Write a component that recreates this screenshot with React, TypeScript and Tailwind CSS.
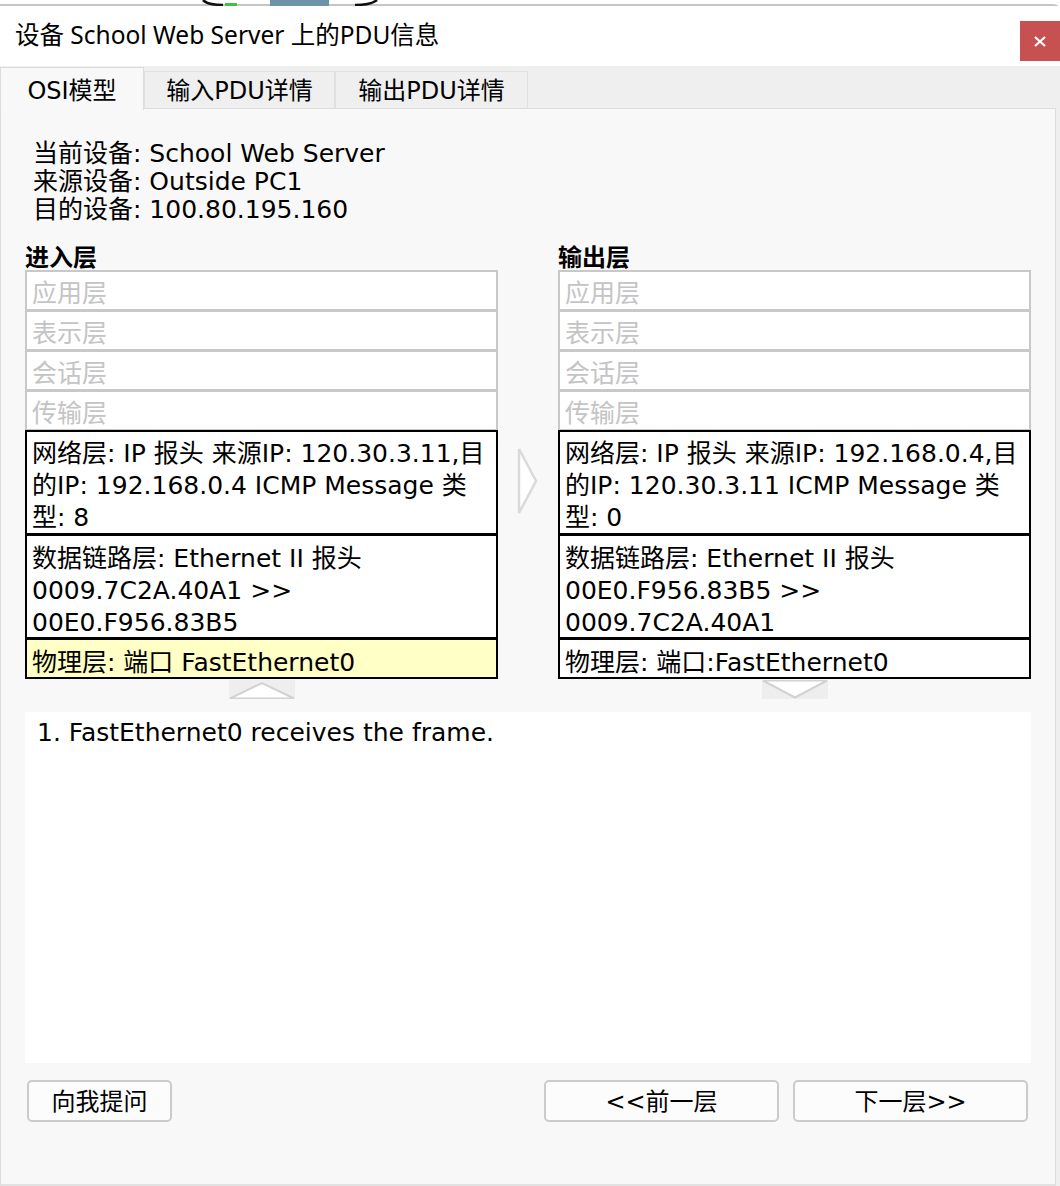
import { ReactNode } from 'react'

const body = 'font-["DejaVu_Sans","Noto_Sans_CJK_SC",sans-serif]'

type Side = {
  title: string
  network: string[]
  datalink: string[]
  physical: string
  physicalBg: string
  arrow: 'up' | 'down'
}

const greyLayers = ['应用层', '表示层', '会话层', '传输层']

const sides: Side[] = [
  {
    title: '进入层',
    network: ['网络层: IP 报头 来源IP: 120.30.3.11,目', '的IP: 192.168.0.4 ICMP Message 类', '型: 8'],
    datalink: ['数据链路层: Ethernet II 报头', '0009.7C2A.40A1 >>', '00E0.F956.83B5'],
    physical: '物理层: 端口 FastEthernet0',
    physicalBg: 'bg-[#ffffc6]',
    arrow: 'up',
  },
  {
    title: '输出层',
    network: ['网络层: IP 报头 来源IP: 192.168.0.4,目', '的IP: 120.30.3.11 ICMP Message 类', '型: 0'],
    datalink: ['数据链路层: Ethernet II 报头', '00E0.F956.83B5 >>', '0009.7C2A.40A1'],
    physical: '物理层: 端口:FastEthernet0',
    physicalBg: 'bg-white',
    arrow: 'down',
  },
]

function Lines({ lines }: { lines: string[] }) {
  return (
    <>
      {lines.map((l) => (
        <div key={l} className="whitespace-nowrap">
          {l}
        </div>
      ))}
    </>
  )
}

function Scroller({ dir }: { dir: 'up' | 'down' }) {
  return (
    <div className="mt-px flex h-[19px] w-[66px] self-center bg-[#eeeeee]">
      <svg width="66" height="19" viewBox="0 0 66 19">
        {dir === 'up' ? (
          <polygon points="1,18.5 33,3 65,18.5" fill="#ffffff" stroke="#d2d2d2" strokeWidth="2" />
        ) : (
          <polygon points="1,0.5 33,17.5 65,0.5" fill="#ffffff" stroke="#d2d2d2" strokeWidth="2" />
        )}
      </svg>
    </div>
  )
}

function Column({ side }: { side: Side }) {
  return (
    <div className="flex w-[473px] flex-col">
      <div className="h-[26px] text-[24px] leading-[28px] font-bold text-black">{side.title}</div>
      {greyLayers.map((g, i) => (
        <div
          key={g}
          className={`h-[41px] overflow-hidden border-2 border-[#c8c8c8] bg-white px-[5px] pt-[6px] leading-[32px] text-[#c4c4c4] ${i > 0 ? '-mt-px' : ''}`}
        >
          {g}
        </div>
      ))}
      <Box className="h-[105px] bg-white pt-[6px]">
        <Lines lines={side.network} />
      </Box>
      <Box className="h-[105px] bg-white pt-[7px]">
        <Lines lines={side.datalink} />
      </Box>
      <Box className={`h-[41px] pt-[7px] ${side.physicalBg}`}>
        <div className="whitespace-nowrap">{side.physical}</div>
      </Box>
      <Scroller dir={side.arrow} />
    </div>
  )
}

function Box({ className, children }: { className: string; children: ReactNode }) {
  return (
    <div
      className={`-mt-px overflow-hidden border-2 border-black px-[5px] leading-[32px] text-black ${className}`}
    >
      {children}
    </div>
  )
}

function Tab({ label, active, width }: { label: string; active?: boolean; width: string }) {
  return (
    <div
      className={
        active
          ? `relative z-10 -mb-[2px] flex h-[43px] items-center justify-center border border-b-0 border-[#dddddd] bg-[#f8f8f8] pt-[3px] ${width}`
          : `flex h-[37px] items-center justify-center border border-b-0 border-[#e0e0e0] bg-[#efefef] pt-[2px] ${width}`
      }
    >
      {label}
    </div>
  )
}

function NavButton({ children, width }: { children: ReactNode; width: string }) {
  return (
    <button
      className={`flex h-[42px] items-center justify-center rounded-[5px] border-2 border-[#cbcbcb] bg-[#fcfcfc] pt-[2px] text-[24px] leading-none text-black ${width}`}
    >
      {children}
    </button>
  )
}

export default function App() {
  return (
    <div className={`flex h-[1186px] w-[1060px] flex-col overflow-hidden bg-white ${body} text-[25px] text-black`}>
      {/* fragments of the window behind */}
      <svg width="1060" height="6" viewBox="0 0 1060 6" className="block shrink-0">
        <path d="M0 5 H1053 Q1058 5 1059 9" fill="none" stroke="#c6c6c6" strokeWidth="2" />
        <path d="M203 0 Q208 5 223 5" fill="none" stroke="#111111" strokeWidth="2.5" />
        <rect x="225" y="3" width="12" height="3" fill="#3fc23f" />
        <rect x="270" y="0" width="59" height="6" fill="#6e92a7" />
        <path d="M355 5 Q371 5 377 0" fill="none" stroke="#111111" strokeWidth="2.5" />
      </svg>

      <div className="flex flex-1 flex-col rounded-tr-[6px] bg-[#efefef]">
        {/* title bar */}
        <div className="flex h-[60px] items-start justify-between bg-white">
          <div className='pt-[14px] pl-[15px] font-["Noto_Sans","Noto_Sans_CJK_SC",sans-serif] text-[24.5px] leading-[30px]'>
            设备 School Web Server 上的PDU信息
          </div>
          <div className="mt-[15px] flex h-[40px] w-[40px] items-center justify-center bg-[#c75050]">
            <svg width="12" height="11" viewBox="0 0 12 11">
              <path d="M1 1 L11 10 M11 1 L1 10" stroke="#ffffff" strokeWidth="2.2" />
            </svg>
          </div>
        </div>

        {/* tabs */}
        <div className="flex h-[42px] items-end text-[24px]">
          <Tab label="OSI模型" active width="w-[144px]" />
          <Tab label="输入PDU详情" width="w-[191px]" />
          <Tab label="输出PDU详情" width="w-[193px]" />
        </div>

        {/* panel */}
        <div className="mr-[4px] flex flex-1 flex-col border-x border-t border-b-2 border-x-[#dcdcdc] border-t-[#dddddd] border-b-[#e2e2e2] bg-[#f8f8f8] px-[24px] pt-[31px]">
          <div className="pl-[8px] text-[25px] leading-[28px]">
            <div>当前设备: School Web Server</div>
            <div>来源设备: Outside PC1</div>
            <div>目的设备: 100.80.195.160</div>
          </div>

          <div className="mt-[20px] flex">
            <Column side={sides[0]} />
            <div className="flex w-[60px] justify-center pt-[204px]">
              <svg width="24" height="66" viewBox="0 0 24 66">
                <polygon points="3,1 20,33 3,65" fill="#ffffff" stroke="#dadada" strokeWidth="2.5" />
              </svg>
            </div>
            <Column side={sides[1]} />
          </div>

          <div className="mt-[13px] h-[351px] bg-white pt-[6px] pl-[12px] leading-[30px]">
            1. FastEthernet0 receives the frame.
          </div>

          <div className="mt-[17px] flex justify-between pl-[2px] pr-[3px]">
            <NavButton width="w-[145px]">向我提问</NavButton>
            <div className="flex gap-[14px]">
              <NavButton width="w-[235px]">&lt;&lt;前一层</NavButton>
              <NavButton width="w-[235px]">下一层&gt;&gt;</NavButton>
            </div>
          </div>
        </div>
      </div>
    </div>
  )
}
